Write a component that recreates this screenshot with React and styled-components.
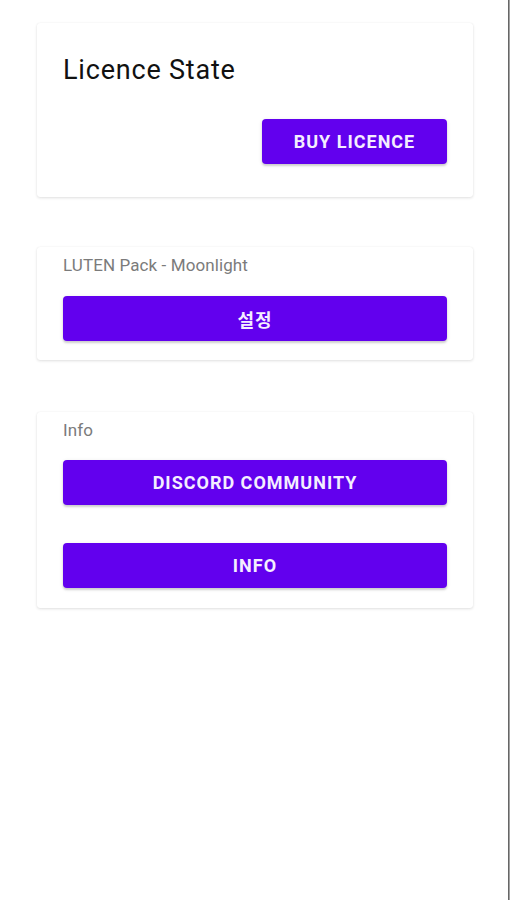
import styled, { createGlobalStyle } from "styled-components"

const GlobalStyle = createGlobalStyle`
    html, body {
        margin: 0;
        padding: 0;
        background: #ffffff;
    }
    body {
        font-family: Roboto, "Noto Sans CJK KR", sans-serif;
    }
`

const Screen = styled.div`
    width: 510px;
    min-height: 900px;
    box-sizing: border-box;
    border-right: 1px solid #a2a2a2;
    box-shadow: inset -1px 0 0 #666666;
    background: #ffffff;
    padding: 23px 0 0 37px;
    display: flex;
    flex-direction: column;
`

const Card = styled.section`
    width: 436px;
    box-sizing: border-box;
    background: #ffffff;
    border-radius: 3px;
    box-shadow: 0 1px 3px rgba(0, 0, 0, 0.12), 0 0 1px rgba(0, 0, 0, 0.08);
    padding: ${(p) => p.$pad};
    margin-bottom: ${(p) => p.$gap || "0"};
    display: flex;
    flex-direction: column;
`

const Title = styled.h2`
    margin: 0;
    font-size: 27px;
    font-weight: 400;
    line-height: 31px;
    letter-spacing: 0.8px;
    color: #111111;
`

const Label = styled.div`
    font-size: 17px;
    line-height: 19px;
    letter-spacing: 0.1px;
    color: #7b7b7b;
`

const Button = styled.button`
    display: flex;
    align-items: center;
    justify-content: center;
    align-self: ${(p) => (p.$compact ? "flex-end" : "stretch")};
    width: ${(p) => (p.$compact ? "185px" : "auto")};
    height: 45px;
    margin-top: ${(p) => p.$top};
    border: none;
    border-radius: 4px;
    background-color: #6200ee;
    color: #f4eeff;
    font-family: Roboto, "Noto Sans CJK KR", sans-serif;
    font-size: 18px;
    font-weight: 700;
    letter-spacing: 1px;
    text-transform: uppercase;
    box-shadow: 0 2px 2px rgba(0, 0, 0, 0.14), 0 1px 4px rgba(0, 0, 0, 0.1);
    cursor: pointer;
`

const App = () => {
  return (
    <>
      <GlobalStyle />
      <Screen>
        <Card $pad="32px 26px 33px 26px" $gap="50px">
          <Title>Licence State</Title>
          <Button $compact $top="33px">Buy Licence</Button>
        </Card>
        <Card $pad="9px 26px 19px 26px" $gap="52px">
          <Label>LUTEN Pack - Moonlight</Label>
          <Button $top="21px">설정</Button>
        </Card>
        <Card $pad="9px 26px 20px 26px">
          <Label>Info</Label>
          <Button $top="20px">Discord Community</Button>
          <Button $top="38px">Info</Button>
        </Card>
      </Screen>
    </>
  )
}

export default App
